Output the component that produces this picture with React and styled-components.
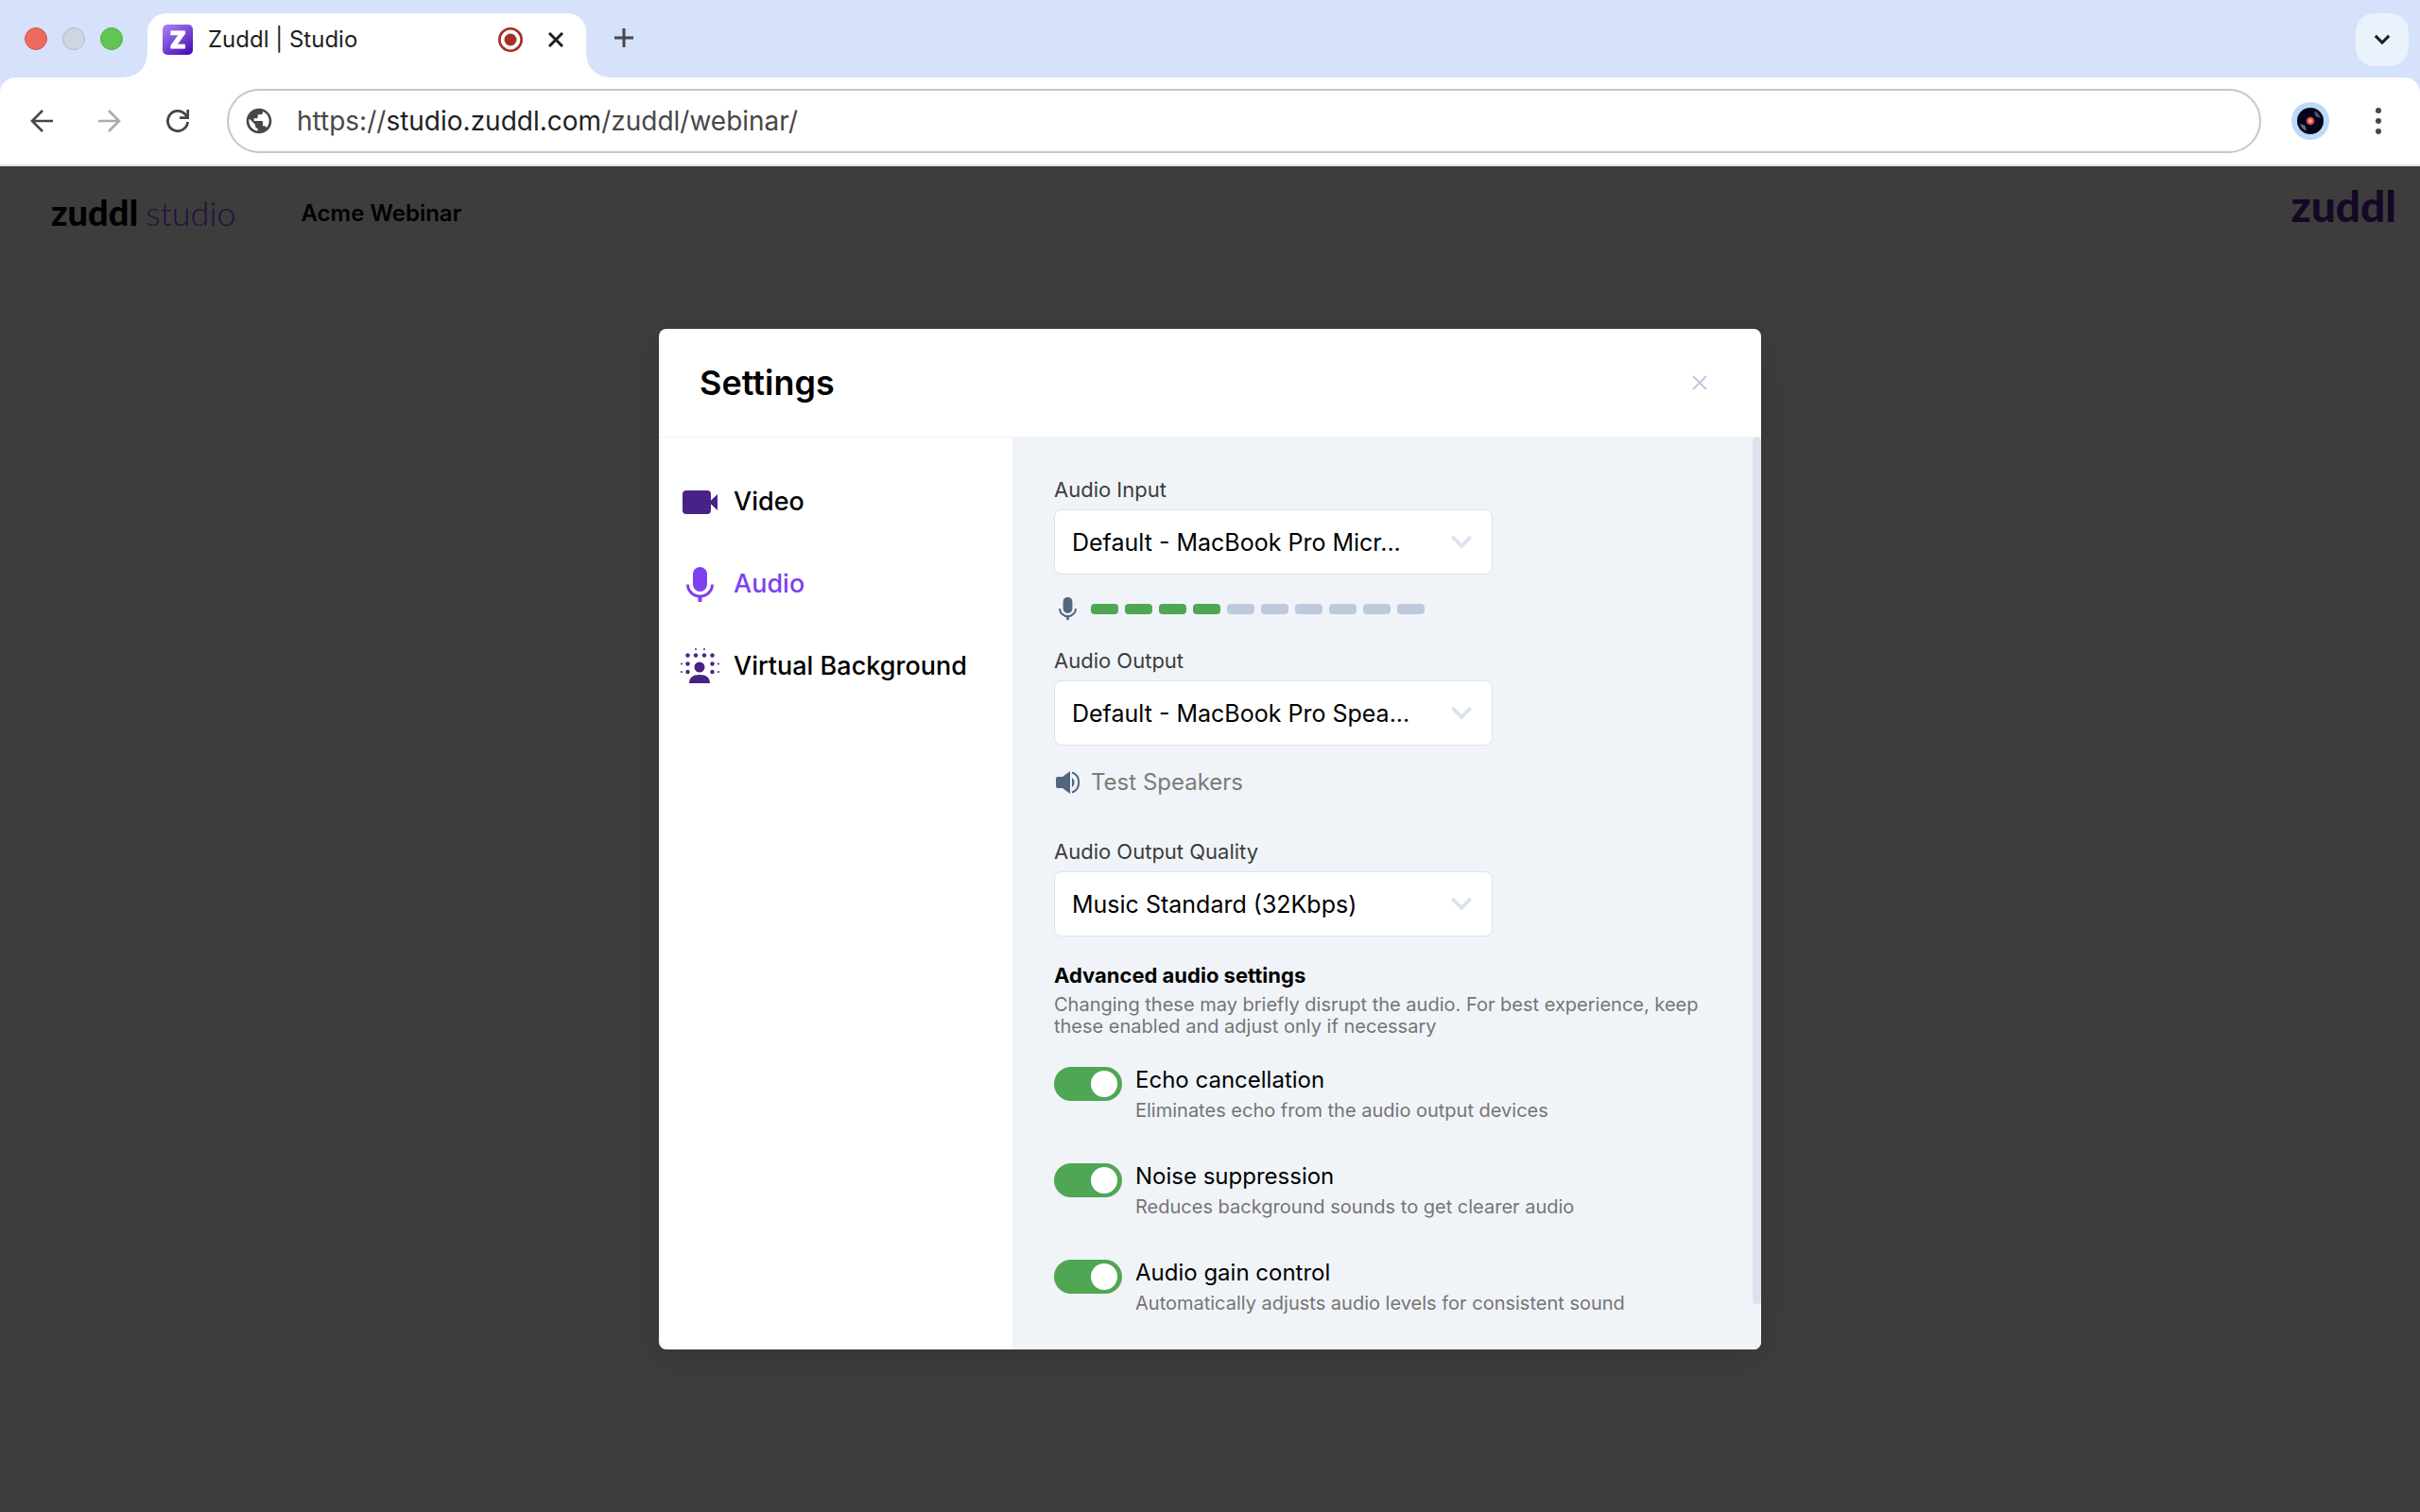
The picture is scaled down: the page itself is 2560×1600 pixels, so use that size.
import React, { useState } from 'react';
import styled, { createGlobalStyle } from 'styled-components';
import { MdPublic } from 'react-icons/md';

const GlobalStyle = createGlobalStyle`

    * {
        box-sizing: border-box;
    }

    body {
        margin: 0;
        font-family: Inter, "Liberation Sans", sans-serif;
        background: #3d3d3d;
        color: #000;
    }

    button {
        display: flex;
        align-items: center;
        justify-content: center;
        padding: 0;
        border: 0;
        background: none;
        font: inherit;
        color: inherit;
        cursor: pointer;
    }

    svg {
        display: block;
        flex: none;
    }

`;

const StyledWindow = styled.div`

    display: flex;
    flex-direction: column;
    min-height: 100vh;

`;

/* ---------- browser ---------- */

const StyledTabStrip = styled.div`

    display: flex;
    align-items: flex-start;
    height: 98px;
    margin-bottom: -16px;
    padding: 14px 12px 0 26px;
    background: #d6e1fc;

`;

const StyledLights = styled.div`

    display: flex;
    gap: 16px;
    padding-top: 15px;
    margin-right: 26px;

`;

const StyledLight = styled.span`

    width: 24px;
    height: 24px;
    border-radius: 50%;
    border: 1px solid ${props => props.$edge};
    background: ${props => props.$color};

`;

const StyledTab = styled.div`

    position: relative;
    display: flex;
    align-items: center;
    width: 464px;
    height: 68px;
    padding: 0 24px 12px 16px;
    border-radius: 20px 20px 0 0;
    background: #fff;
    color: #1f1f1f;
    font-size: 24px;
    line-height: 32px;

    &::before,
    &::after {
        content: '';
        position: absolute;
        bottom: 0;
        width: 24px;
        height: 24px;
    }

    &::before {
        right: 100%;
        background: radial-gradient(circle at 0 0, transparent 23px, #fff 24px);
    }

    &::after {
        left: 100%;
        background: radial-gradient(circle at 100% 0, transparent 23px, #fff 24px);
    }

`;

const StyledTabTitle = styled.span`

    flex: 1;
    margin-left: 16px;

`;

const StyledTabClose = styled.button`

    width: 16px;
    height: 16px;
    margin-left: 27px;

`;

const StyledNewTab = styled.button`

    width: 32px;
    height: 32px;
    margin: 10px auto 0 24px;

`;

const StyledTabSearch = styled.button`

    width: 56px;
    height: 56px;
    border-radius: 20px;
    background: #eaf2fc;

`;

const StyledToolbar = styled.div`

    position: relative;
    display: flex;
    align-items: center;
    height: 94px;
    padding: 0 32px;
    border-radius: 16px 16px 0 0;
    border-bottom: 2px solid #e1e3e1;
    background: #fff;

`;

const StyledToolButton = styled.button`

    width: 24px;
    height: 24px;
    margin-right: 48px;

`;

const StyledReload = styled(StyledToolButton)`

    margin-right: 40px;

`;

const StyledAddress = styled.div`

    flex: 1;
    display: flex;
    align-items: center;
    height: 68px;
    padding: 0 16px;
    border: 2px solid #c7c7c7;
    border-radius: 34px;
    color: #474747;
    font-size: 28px;
    line-height: 36px;

`;

const StyledUrl = styled.span`

    margin-left: 24px;
    white-space: nowrap;

    b {
        font-weight: 400;
        color: #1f1f1f;
    }

`;

const StyledProfile = styled.button`

    width: 40px;
    height: 40px;
    margin: 0 40px 0 32px;

`;

const StyledMenu = styled.button`

    width: 24px;
    height: 32px;

`;

/* ---------- studio page ---------- */

const StyledPage = styled.main`

    position: relative;
    flex: 1;
    display: flex;
    flex-direction: column;
    background: #3d3d3d;

`;

const StyledPageHeader = styled.header`

    display: flex;
    align-items: center;
    height: 100px;
    padding: 0 25px 0 54px;

`;

const StyledWordmark = styled.span`

    font-family: Lato, Inter, sans-serif;
    font-size: 38px;
    line-height: 48px;
    font-weight: 900;
    color: #000;

`;

const StyledProductName = styled(StyledWordmark)`

    font-size: 36px;
    font-weight: 300;
    color: #231040;

`;

const StyledBrand = styled(StyledWordmark)`

    margin-bottom: 16px;
    font-size: 46px;
    color: #150826;

`;

const StyledLogo = styled.a`

    display: flex;
    align-items: baseline;
    gap: 8px;
    margin-bottom: 4px;
    text-decoration: none;

`;

const StyledDivider = styled.span`

    width: 1px;
    height: 42px;
    margin: 0 36px 0 32px;
    background: #383838;

`;

const StyledEventName = styled.h1`

    flex: 1;
    margin: 0;
    font-size: 24px;
    line-height: 32px;
    font-weight: 600;

`;

const StyledOverlay = styled.div`

    position: absolute;
    inset: 0;
    display: flex;
    align-items: center;
    justify-content: center;

`;

/* ---------- settings modal ---------- */

const StyledModal = styled.section`

    display: flex;
    flex-direction: column;
    width: 92%;
    max-width: 1166px;
    border-radius: 8px;
    overflow: hidden;
    background: #fff;
    box-shadow: 0 8px 40px rgba(0, 0, 0, 0.12);

`;

const StyledModalHeader = styled.div`

    display: flex;
    align-items: center;
    justify-content: space-between;
    height: 115px;
    padding: 0 53px 0 43px;
    border-bottom: 1px solid #f0f2f6;

`;

const StyledModalTitle = styled.h2`

    margin: 0;
    font-size: 36px;
    line-height: 44px;
    font-weight: 600;

`;

const StyledClose = styled.button`

    width: 24px;
    height: 24px;

`;

const StyledModalBody = styled.div`

    display: flex;

`;

const StyledNav = styled.nav`

    flex: none;
    display: flex;
    flex-direction: column;
    gap: 47px;
    width: 374px;
    padding: 48px 23px;

`;

const StyledNavItem = styled.button`

    justify-content: flex-start;
    gap: 15px;
    height: 40px;
    font-size: 27px;
    line-height: 36px;
    font-weight: 500;
    white-space: nowrap;
    color: ${props => (props.$active ? '#7d42ee' : '#000')};

    svg {
        color: ${props => (props.$active ? '#7d42ee' : '#472388')};
    }

`;

const StyledPanel = styled.div`

    flex: 1;
    padding: 41px 34px 37px 44px;
    background: #f0f4f9;

`;

const StyledRail = styled.div`

    width: 9px;
    background: #f0f4f9;

`;

const StyledThumb = styled.div`

    width: 9px;
    height: 95%;
    border-radius: 4px;
    background: #dbe2ec;

`;

const StyledField = styled.div`

    display: flex;
    flex-direction: column;
    gap: 7px;

    label {
        font-size: 22px;
        line-height: 28px;
        color: #3d3d3d;
    }

`;

const StyledSelectBox = styled.div`

    position: relative;
    max-width: 464px;

    svg {
        position: absolute;
        top: 28px;
        right: 22px;
        pointer-events: none;
    }

`;

const StyledSelect = styled.select`

    display: block;
    width: 100%;
    height: 69px;
    padding: 0 60px 0 18px;
    border: 1px solid #dae2ed;
    border-radius: 8px;
    appearance: none;
    background: #fff;
    color: #000;
    font-family: inherit;
    font-size: 25px;

`;

const StyledMeter = styled.div`

    display: flex;
    align-items: center;
    gap: 7px;
    height: 28px;
    margin: 22px 0 27px 5px;

    svg {
        margin-right: 8px;
    }

`;

const StyledBar = styled.span`

    width: 29px;
    height: 11px;
    border-radius: 4px;
    background: ${props => (props.$on ? '#50a753' : '#becadc')};

`;

const StyledTest = styled.button`

    gap: 11px;
    margin: 25px 0 45px 2px;
    font-size: 24px;
    line-height: 28px;
    color: #7b7b7b;

`;

const StyledAdvancedTitle = styled.h3`

    margin: 27px 0 6px;
    font-size: 22px;
    line-height: 28px;
    font-weight: 700;

`;

const StyledHint = styled.p`

    margin: 0;
    font-size: 20px;
    line-height: 23px;
    color: #757575;

`;

const StyledSwitchList = styled.div`

    display: flex;
    flex-direction: column;
    gap: 44px;
    margin-top: 31px;

`;

const StyledSwitchRow = styled.div`

    display: flex;
    gap: 14px;

    label {
        font-size: 24px;
        line-height: 28px;
    }

    p {
        margin-top: 7px;
    }

`;

const StyledSwitch = styled.input`

    flex: none;
    display: flex;
    align-items: center;
    width: 72px;
    height: 36px;
    margin: 0;
    padding: 0 5px;
    border-radius: 18px;
    appearance: none;
    background: #becadc;

    &::before {
        content: '';
        width: 28px;
        height: 28px;
        border-radius: 50%;
        background: #fff;
    }

    &:checked {
        justify-content: flex-end;
        background: #50a753;
    }

`;

const Favicon = () => (
    <svg width="32" height="32" viewBox="0 0 32 32">
        <defs>
            <linearGradient id="favicon" x1="0.1" y1="0" x2="0.8" y2="1">
                <stop offset="0" stopColor="#a97ff0" />
                <stop offset="0.5" stopColor="#7a48d8" />
                <stop offset="1" stopColor="#4a0fb8" />
            </linearGradient>
        </defs>
        <rect width="32" height="32" rx="5" fill="url(#favicon)" />
        <text
            x="16"
            y="25"
            textAnchor="middle"
            fontFamily="Inter"
            fontWeight="900"
            fontSize="24"
            fill="#fff"
            stroke="#fff"
            strokeWidth="1"
            strokeLinejoin="round"
        >
            Z
        </text>
    </svg>
);

const Recording = () => (
    <svg width="26" height="26" viewBox="0 0 26 26">
        <circle cx="13" cy="13" r="11.7" fill="none" stroke="#a53027" strokeWidth="2.6" />
        <circle cx="13" cy="13" r="6.5" fill="#a53027" />
    </svg>
);

const Cross = ({ size, color, weight }) => (
    <svg width={size} height={size} viewBox="0 0 16 16" stroke={color} strokeWidth={weight}>
        <path d="M1 1L15 15M15 1L1 15" />
    </svg>
);

const Plus = () => (
    <svg width="20" height="20" viewBox="0 0 20 20" stroke="#474747" strokeWidth="3">
        <path d="M10 0V20M0 10H20" />
    </svg>
);

const ArrowLeft = () => (
    <svg width="24" height="24" viewBox="0 0 24 24" fill="none" stroke="#474747" strokeWidth="2.6">
        <path d="M24 12H2M13 1L2 12L13 23" />
    </svg>
);

const ArrowRight = () => (
    <svg width="24" height="24" viewBox="0 0 24 24" fill="none" stroke="#ababab" strokeWidth="2.6">
        <path d="M0 12H22M11 1L22 12L11 23" />
    </svg>
);

const Reload = () => (
    <svg width="24" height="24" viewBox="0 0 24 24" fill="none" stroke="#474747" strokeWidth="2.8">
        <path d="M22.6 13A10.6 10.6 0 1 1 19.8 4.8L22.8 8.2" />
        <path d="M22.8 0V8.6H14" />
    </svg>
);

const Chevron = ({ width, height, color, weight, round }) => (
    <svg
        width={width}
        height={height}
        viewBox="0 0 20 13"
        fill="none"
        stroke={color}
        strokeWidth={weight}
        strokeLinecap={round ? 'round' : 'butt'}
    >
        <path d="M2 2L10 10L18 2" />
    </svg>
);

const Vinyl = () => (
    <svg width="40" height="40" viewBox="0 0 40 40">
        <circle cx="20" cy="20" r="20" fill="#bcdaf8" />
        <circle cx="20" cy="20" r="14" fill="#04041a" />
        <path d="M24 9.5A11.5 11.5 0 0 1 31 17L25.5 15Z" fill="#77788a" opacity="0.7" />
        <path d="M9 23A11.5 11.5 0 0 0 16 30.5L14.5 25Z" fill="#9a9a96" opacity="0.7" />
        <circle cx="20" cy="20" r="4.3" fill="#e2436b" />
        <circle cx="20" cy="20" r="2" fill="#f7c548" />
    </svg>
);

const Dots = () => (
    <svg width="6" height="28" viewBox="0 0 6 28" fill="#474747">
        <circle cx="3" cy="3" r="3" />
        <circle cx="3" cy="14" r="3" />
        <circle cx="3" cy="25" r="3" />
    </svg>
);

const VideoIcon = () => (
    <svg width="41" height="40" viewBox="0 0 41 40" fill="currentColor">
        <rect x="2" y="8" width="30" height="25" rx="4" />
        <path d="M30 20.5L39 12V29Z" />
    </svg>
);

const MicIcon = ({ width, height }) => (
    <svg width={width} height={height} viewBox="0 0 29 37" fill="none" stroke="currentColor">
        <rect x="7" y="0" width="15" height="26" rx="7.5" fill="currentColor" stroke="none" />
        <path d="M1.5 18.5A13 12.5 0 0 0 27.5 18.5" strokeWidth="3" />
        <path d="M14.5 30V37" strokeWidth="4" />
    </svg>
);

const NavMicIcon = () => (
    <svg width="41" height="40" viewBox="0 0 41 40">
        <g transform="translate(6 2)">
            <MicIcon width={29} height={37} />
        </g>
    </svg>
);

const dots = [
    [16, 2, 1], [25, 2, 1],
    [7.5, 8.5, 2.2], [16, 8.5, 2.2], [25, 8.5, 2.2], [33.5, 8.5, 2.2],
    [1, 17.5, 1], [7.5, 17.5, 2.2], [33.5, 17.5, 2.2], [40, 17.5, 1],
    [1, 26, 1], [7.5, 26, 2.2], [33.5, 26, 2.2], [40, 26, 1]
];

const BackgroundIcon = () => (
    <svg width="41" height="40" viewBox="0 0 41 40" fill="currentColor">
        {dots.map(([cx, cy, r]) => <circle key={`${cx}-${cy}`} cx={cx} cy={cy} r={r} />)}
        <circle cx="20" cy="21" r="5.5" />
        <path d="M9 38C9 32 13 29 20 29C27 29 31 32 31 38Z" />
    </svg>
);

const SpeakerIcon = () => (
    <svg width="26" height="26" viewBox="0 0 26 26" fill="#51667f">
        <path d="M2 7H7L15 1V25L7 19H2Q0 19 0 17V9Q0 7 2 7Z" />
        <path d="M17 8Q19.6 9.5 19.6 13T17 18Z" />
        <path d="M17 2.5C26.5 5.5 26.5 20.5 17 23.5" fill="none" stroke="#51667f" strokeWidth="2" />
    </svg>
);

const navItems = [
    { name: 'Video', Icon: VideoIcon },
    { name: 'Audio', Icon: NavMicIcon },
    { name: 'Virtual Background', Icon: BackgroundIcon }
];

const switches = [
    { id: 'echo', name: 'Echo cancellation', hint: 'Eliminates echo from the audio output devices' },
    { id: 'noise', name: 'Noise suppression', hint: 'Reduces background sounds to get clearer audio' },
    { id: 'gain', name: 'Audio gain control', hint: 'Automatically adjusts audio levels for consistent sound' }
];

function SelectField({ id, label, value }) {

    return (
        <StyledField>
            <label htmlFor={id}>{label}</label>
            <StyledSelectBox>
                <StyledSelect id={id}>
                    <option>{value}</option>
                </StyledSelect>
                <Chevron width={22} height={14} color="#dae2ed" weight={3.6} round />
            </StyledSelectBox>
        </StyledField>
    );
}

function BrowserBar() {

    return (
        <>
            <StyledTabStrip>
                <StyledLights>
                    <StyledLight $color="#ec6a5e" $edge="#d5584e" />
                    <StyledLight $color="#d0d5e3" $edge="#b3b9c6" />
                    <StyledLight $color="#61c554" $edge="#52ae46" />
                </StyledLights>
                <StyledTab>
                    <Favicon />
                    <StyledTabTitle>Zuddl | Studio</StyledTabTitle>
                    <Recording />
                    <StyledTabClose aria-label="Close tab">
                        <Cross size={16} color="#1f1f1f" weight={3} />
                    </StyledTabClose>
                </StyledTab>
                <StyledNewTab aria-label="New tab"><Plus /></StyledNewTab>
                <StyledTabSearch aria-label="Search tabs">
                    <Chevron width={18} height={12} color="#1f1f1f" weight={3.4} />
                </StyledTabSearch>
            </StyledTabStrip>
            <StyledToolbar>
                <StyledToolButton aria-label="Back"><ArrowLeft /></StyledToolButton>
                <StyledToolButton aria-label="Forward"><ArrowRight /></StyledToolButton>
                <StyledReload aria-label="Reload"><Reload /></StyledReload>
                <StyledAddress>
                    <MdPublic size={32} />
                    <StyledUrl>https://<b>studio.zuddl.com</b>/zuddl/webinar/</StyledUrl>
                </StyledAddress>
                <StyledProfile aria-label="Profile"><Vinyl /></StyledProfile>
                <StyledMenu aria-label="Menu"><Dots /></StyledMenu>
            </StyledToolbar>
        </>
    );
}

function AudioPanel() {

    const [enabled, setEnabled] = useState({ echo: true, noise: true, gain: true });
    const level = 4;

    return (
        <StyledPanel>
            <SelectField id="audio-input" label="Audio Input" value="Default - MacBook Pro Micr..." />
            <StyledMeter>
                <svg width="19" height="26" viewBox="0 0 29 37" color="#51667f">
                    <MicIcon width={29} height={37} />
                </svg>
                {Array.from({ length: 10 }, (_, i) => <StyledBar key={i} $on={i < level} />)}
            </StyledMeter>
            <SelectField id="audio-output" label="Audio Output" value="Default - MacBook Pro Spea..." />
            <StyledTest>
                <SpeakerIcon />
                Test Speakers
            </StyledTest>
            <SelectField id="audio-quality" label="Audio Output Quality" value="Music Standard (32Kbps)" />
            <StyledAdvancedTitle>Advanced audio settings</StyledAdvancedTitle>
            <StyledHint>
                Changing these may briefly disrupt the audio. For best experience, keep these enabled and adjust only if necessary
            </StyledHint>
            <StyledSwitchList>
                {switches.map(({ id, name, hint }) => (
                    <StyledSwitchRow key={id}>
                        <StyledSwitch
                            id={id}
                            type="checkbox"
                            checked={enabled[id]}
                            onChange={() => setEnabled({ ...enabled, [id]: !enabled[id] })}
                        />
                        <div>
                            <label htmlFor={id}>{name}</label>
                            <StyledHint>{hint}</StyledHint>
                        </div>
                    </StyledSwitchRow>
                ))}
            </StyledSwitchList>
        </StyledPanel>
    );
}

function SettingsModal() {

    return (
        <StyledModal role="dialog" aria-labelledby="settings-title">
            <StyledModalHeader>
                <StyledModalTitle id="settings-title">Settings</StyledModalTitle>
                <StyledClose aria-label="Close"><Cross size={16} color="#bccade" weight={2} /></StyledClose>
            </StyledModalHeader>
            <StyledModalBody>
                <StyledNav>
                    {navItems.map(({ name, Icon }) => (
                        <StyledNavItem key={name} $active={name === 'Audio'}>
                            <Icon />
                            {name}
                        </StyledNavItem>
                    ))}
                </StyledNav>
                <AudioPanel />
                <StyledRail><StyledThumb /></StyledRail>
            </StyledModalBody>
        </StyledModal>
    );
}

function App() {

    return (
        <StyledWindow>
            <GlobalStyle />
            <BrowserBar />
            <StyledPage>
                <StyledPageHeader>
                    <StyledLogo href="#studio">
                        <StyledWordmark>zuddl</StyledWordmark>
                        <StyledProductName>studio</StyledProductName>
                    </StyledLogo>
                    <StyledDivider />
                    <StyledEventName>Acme Webinar</StyledEventName>
                    <StyledBrand>zuddl</StyledBrand>
                </StyledPageHeader>
                <StyledOverlay>
                    <SettingsModal />
                </StyledOverlay>
            </StyledPage>
        </StyledWindow>
    );
}

export default App;
